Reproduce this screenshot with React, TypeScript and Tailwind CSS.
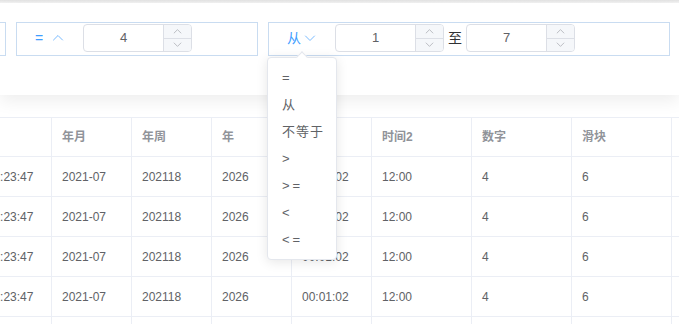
import React from "react";

const font = "font-['Liberation_Sans','Noto_Sans_CJK_SC',sans-serif]";

const columns = [
  { w: "w-[140px]", title: "创建时间", value: "2021-07-14 12:23:47" },
  { w: "w-[80px]", title: "年月", value: "2021-07" },
  { w: "w-[80px]", title: "年周", value: "202118" },
  { w: "w-[80px]", title: "年", value: "2026" },
  { w: "w-[80px]", title: "时间1", value: "00:01:02" },
  { w: "w-[100px]", title: "时间2", value: "12:00" },
  { w: "w-[100px]", title: "数字", value: "4" },
  { w: "w-[100px]", title: "滑块", value: "6" },
  { w: "w-[100px]", title: "", value: "" },
];

// wide-spaced ones render like the reference's "> ="
const operators = [
  { label: "=", wide: false },
  { label: "从", wide: false },
  { label: "不等于", wide: false },
  { label: ">", wide: false },
  { label: ">=", wide: true },
  { label: "<", wide: false },
  { label: "<=", wide: true },
];

function Chevron({ up, className }: { up?: boolean; className?: string }) {
  return (
    <svg viewBox="0 0 12 12" className={className} fill="none" stroke="currentColor" strokeWidth="1" strokeLinecap="round" strokeLinejoin="round">
      <path d={up ? "M1.5 8 L6 3.5 L10.5 8" : "M1.5 4 L6 8.5 L10.5 4"} />
    </svg>
  );
}

function NumberInput({ value }: { value: string }) {
  return (
    <div className="flex h-[28px] w-[109px] shrink-0 overflow-hidden rounded-[4px] border border-[#dcdfe6] bg-white">
      <div className="flex flex-1 items-center justify-center text-[13px] text-[#606266]">{value}</div>
      <div className="flex w-[28px] flex-col border-l border-[#dcdfe6] bg-[#f5f7fa] text-[#a8abb2]">
        <div className="flex flex-1 items-center justify-center border-b border-[#dcdfe6]">
          <Chevron up className="h-[9px] w-[9px]" />
        </div>
        <div className="flex flex-1 items-center justify-center">
          <Chevron className="h-[9px] w-[9px]" />
        </div>
      </div>
    </div>
  );
}

function OperatorSelect({ label, open }: { label: string; open?: boolean }) {
  return (
    <div className="flex h-[28px] w-[66px] shrink-0 items-center pl-[18px]">
      <span className="w-[17px] text-[14px] text-[#409eff]">{label}</span>
      <Chevron up={open} className="h-[12px] w-[12px] text-[#79bbff]" />
    </div>
  );
}

function FilterBox({ width, children }: { width: string; children: React.ReactNode }) {
  return (
    <div className={`flex h-[34px] shrink-0 items-start border border-[#c9dcf1] pt-[1px] ${width}`}>
      {children}
    </div>
  );
}

export default function App() {
  return (
    <div className={`relative h-[324px] w-[679px] overflow-hidden bg-white ${font}`}>
      <div className="h-[3px] bg-gradient-to-b from-[#e3e3e3] to-[#f4f4f4]" />
      <div className="relative z-10 h-[92px] bg-white pt-[19px] shadow-[0_6px_16px_0_rgba(0,0,0,0.07)]">
        <div className="ml-[-236px] flex gap-[10px]">
          <FilterBox width="w-[242px]">
            <OperatorSelect label="=" />
            <NumberInput value="2" />
          </FilterBox>
          <FilterBox width="w-[242px]">
            <OperatorSelect label="=" open />
            <NumberInput value="4" />
          </FilterBox>
          <FilterBox width="w-[402px]">
            <OperatorSelect label="从" />
            <NumberInput value="1" />
            <span className="mx-[4px] flex h-[28px] items-center text-[14px] text-[#303133]">至</span>
            <NumberInput value="7" />
          </FilterBox>
        </div>
      </div>

      <div className="mt-[22px] overflow-hidden">
        <div className="ml-[-88px] w-[900px]">
          <div className="flex h-[40px] border-y border-[#ebeef5]">
            {columns.map((c, i) => (
              <div key={i} className={`${c.w} flex shrink-0 items-center border-r border-[#ebeef5] px-[10px] text-[12px] font-bold text-[#909399]`}>
                {c.title}
              </div>
            ))}
          </div>
          {[0, 1, 2, 3, 4].map((r) => (
            <div key={r} className="flex h-[40px] border-b border-[#ebeef5]">
              {columns.map((c, i) => (
                <div key={i} className={`${c.w} flex shrink-0 items-center whitespace-nowrap border-r border-[#ebeef5] px-[10px] text-[12px] text-[#606266]`}>
                  {c.value}
                </div>
              ))}
            </div>
          ))}
        </div>
      </div>

      <div className="absolute left-[267px] top-[57px] z-20 w-[70px] rounded-[4px] border border-[#e4e7ed] bg-white py-[6px] shadow-[0_2px_12px_0_rgba(0,0,0,0.1)]">
        <div className="absolute left-[30px] top-[-5px] h-[8px] w-[8px] rotate-45 border-l border-t border-[#e4e7ed] bg-white" />
        {operators.map((op) => (
          <div
            key={op.label}
            className={`flex h-[27px] items-center whitespace-nowrap pl-[14px] text-[13px] text-[#606266] ${op.wide ? "tracking-[3px]" : "tracking-[1px]"}`}
          >
            {op.label}
          </div>
        ))}
      </div>
    </div>
  );
}
